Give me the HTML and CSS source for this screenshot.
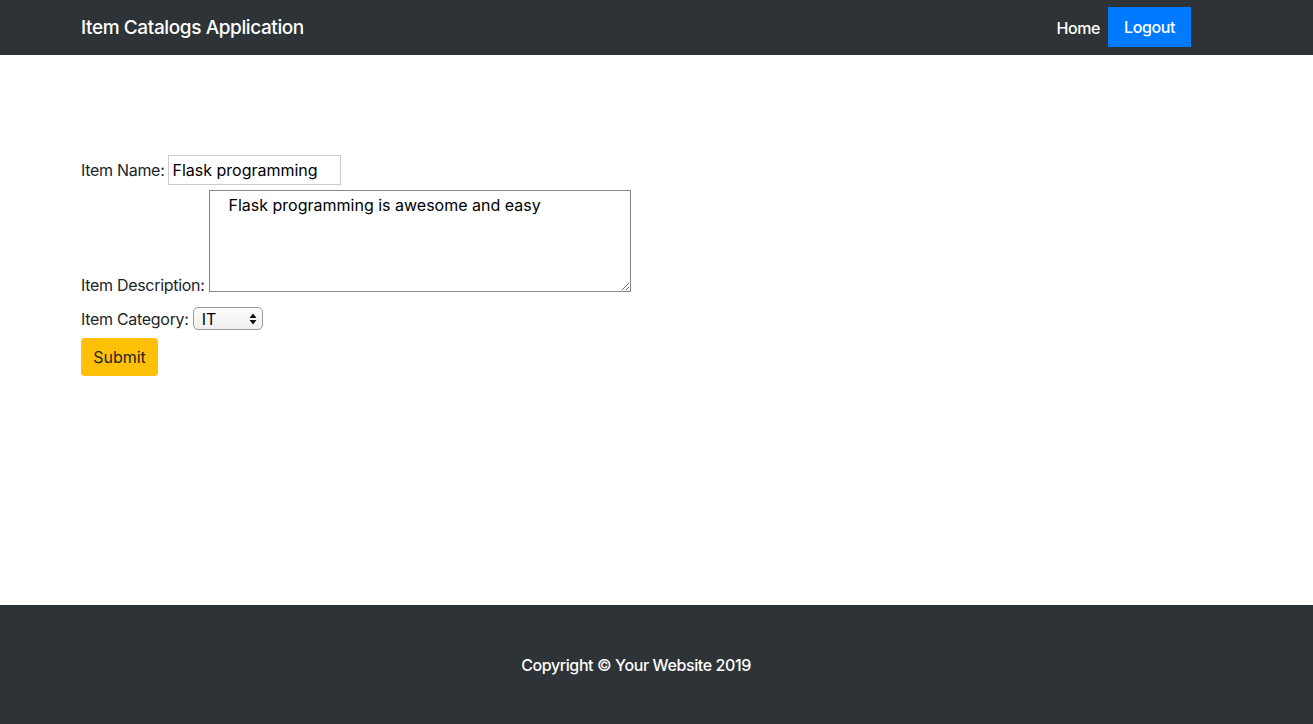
FILE: index.html
```html
<!DOCTYPE html>
<html>
<head>
<meta charset="utf-8">
<link rel="stylesheet" href="styles.css">
</head>
<body>
<nav class="navbar">
  <div class="nav-inner">
    <a class="brand">Item Catalogs Application</a>
    <div class="nav-links">
      <a class="nav-link">Home</a>
      <a class="nav-btn">Logout</a>
    </div>
  </div>
</nav>
<main class="main">
  <form class="item-form">
    <div class="row row-name">
      <label>Item Name:</label>
      <input class="name-input" type="text" value="Flask programming">
    </div>
    <div class="row row-desc">
      <label>Item Description:</label>
      <textarea class="desc">Flask programming is awesome and easy</textarea>
    </div>
    <div class="row row-cat">
      <label>Item Category:</label>
      <span class="select-wrap">
        <select class="cat"><option>IT</option></select>
        <svg class="select-arrows" width="8" height="12" viewBox="0 0 8 12"><path d="M4 0.5 L7.5 5 L0.5 5 Z M0.5 7 L7.5 7 L4 11.5 Z" fill="#111"/></svg>
      </span>
    </div>
    <button class="submit" type="button">Submit</button>
  </form>
</main>
<footer class="footer">
  <p class="copy">Copyright © Your Website 2019</p>
</footer>
</body>
</html>
```

FILE: styles.css
```css
* { box-sizing: border-box; }
html, body { margin: 0; padding: 0; }
body {
  font-family: Inter, "Liberation Sans", sans-serif;
  font-size: 16px;
  color: #212529;
  background: #fff;
}
.navbar {
  background: #2e3338;
  height: 55px;
}
.nav-inner {
  display: flex;
  align-items: center;
  justify-content: space-between;
  height: 100%;
  padding: 0 122px 0 81px;
}
.brand {
  color: #fff;
  font-size: 19px;
  font-weight: 500;
  letter-spacing: -0.4px;
}
.nav-links {
  display: flex;
  align-items: center;
  gap: 8px;
}
.nav-link {
  color: #fff;
  font-size: 16px;
  font-weight: 500;
  letter-spacing: -0.4px;
}
.nav-btn {
  display: flex;
  align-items: center;
  justify-content: center;
  width: 83px;
  height: 40px;
  margin-top: -1px;
  background: #007bff;
  color: #fff;
  font-weight: 500;
  letter-spacing: -0.4px;
}
.main {
  height: 550px;
  padding: 100px 81px 0;
}
.item-form {
  font-size: 16px;
  letter-spacing: -0.3px;
}
.row { display: flex; gap: 4px; }
.row-name { align-items: center; }
.row-desc { align-items: flex-end; margin-top: 5px; }
.row-cat { align-items: center; margin-top: 15px; }
.name-input {
  width: 173px;
  height: 30px;
  border: 1px solid #ccc;
  padding: 0 3px;
  font: inherit;
  color: #000;
  outline: none;
}
.desc {
  width: 422px;
  height: 102px;
  border: 1px solid #888;
  padding: 4px 19px;
  font: inherit;
  color: #000;
  resize: both;
}
.row-desc label { line-height: 1; margin-bottom: -1px; }
.select-wrap {
  position: relative;
  display: inline-block;
  width: 70px;
  height: 23px;
}
.cat {
  -webkit-appearance: none;
  appearance: none;
  width: 70px;
  height: 23px;
  border: 1px solid #9a9a9a;
  border-radius: 5px;
  font: inherit;
  padding: 0 8px;
  background: linear-gradient(#fdfdfd, #efefef);
  color: #000;
}
.select-arrows {
  position: absolute;
  right: 6px;
  top: 6px;
  pointer-events: none;
}
.submit {
  margin-top: 8px;
  width: 77px;
  height: 38px;
  background: #ffc107;
  border: none;
  border-radius: 4px;
  font: inherit;
  color: #212529;
  padding: 0;
}
.footer {
  background: #2e3338;
  height: 119px;
  display: flex;
  align-items: center;
  justify-content: center;
  padding-right: 41px;
}
.copy {
  margin: 0;
  color: #fff;
  font-size: 16px;
  font-weight: 500;
  letter-spacing: -0.4px;
}
```
